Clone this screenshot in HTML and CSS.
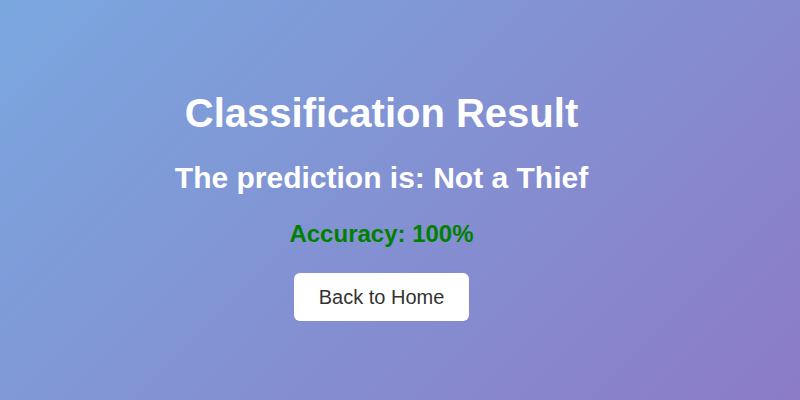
FILE: index.html
```html
<!DOCTYPE html>
<html lang="en">
<head>
<meta charset="utf-8">
<title>Classification Result</title>
<link rel="stylesheet" href="styles.css">
</head>
<body>
<main class="result">
  <h1 class="result-title">Classification Result</h1>
  <h2 class="result-prediction">The prediction is: Not a Thief</h2>
  <p class="result-accuracy">Accuracy: 100%</p>
  <a class="home-button" href="#">Back to Home</a>
</main>
</body>
</html>
```

FILE: styles.css
```css
html, body {
  margin: 0;
  padding: 0;
}

body {
  width: 800px;
  height: 400px;
  overflow: hidden;
  background: linear-gradient(135deg, #7aa7df 0%, #8c7bc6 100%);
  font-family: "Liberation Sans", Arial, sans-serif;
}

.result {
  display: flex;
  flex-direction: column;
  align-items: center;
  padding-top: 91px;
  padding-right: 37px;
  text-align: center;
}

.result-title {
  margin: 0;
  font-size: 40px;
  font-weight: bold;
  color: #ffffff;
}

.result-prediction {
  margin: 25px 0 0;
  font-size: 30px;
  font-weight: bold;
  color: #ffffff;
}

.result-accuracy {
  margin: 25px 0 0;
  font-size: 24px;
  font-weight: bold;
  color: #008000;
}

.home-button {
  margin-top: 25px;
  display: inline-block;
  padding: 12px 25px;
  background: #ffffff;
  color: #333333;
  font-size: 20px;
  line-height: 24px;
  text-decoration: none;
  border-radius: 6px;
}
```
